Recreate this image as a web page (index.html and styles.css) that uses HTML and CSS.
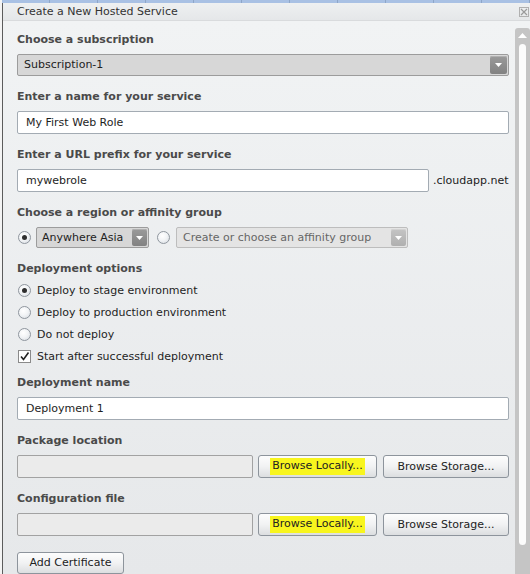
FILE: index.html
```html
<!DOCTYPE html>
<html>
<head>
<meta charset="utf-8">
<title>Create a New Hosted Service</title>
<link rel="stylesheet" href="styles.css">
</head>
<body>
<div class="strip"></div>
<div class="frame">
  <div class="titlebar">
    <span class="title">Create a New Hosted Service</span>
    <svg class="close" width="10" height="10" viewBox="0 0 10 10">
      <rect x="0.5" y="0.5" width="9" height="9" fill="none" stroke="#b0b0b0" stroke-width="1"/>
      <path d="M2 2 L8 8 M8 2 L2 8" stroke="#9a9a9a" stroke-width="1.2"/>
    </svg>
  </div>
  <div class="main">
    <div class="form">
      <div class="label first">Choose a subscription</div>
      <div class="select sub">
        <span class="sel-text">Subscription-1</span>
        <span class="dd"><svg width="7" height="4" viewBox="0 0 7 4"><path d="M0 0 L7 0 L3.5 4 Z" fill="#fff"/></svg></span>
      </div>

      <div class="label">Enter a name for your service</div>
      <div class="input">My First Web Role</div>

      <div class="label">Enter a URL prefix for your service</div>
      <div class="row">
        <div class="input url">mywebrole</div>
        <span class="suffix">.cloudapp.net</span>
      </div>

      <div class="label">Choose a region or affinity group</div>
      <div class="row region">
        <span class="radio on"></span>
        <div class="select asia">
          <span class="sel-text">Anywhere Asia</span>
          <span class="dd"><svg width="7" height="4" viewBox="0 0 7 4"><path d="M0 0 L7 0 L3.5 4 Z" fill="#fff"/></svg></span>
        </div>
        <span class="radio"></span>
        <div class="select affinity">
          <span class="sel-text">Create or choose an affinity group</span>
          <span class="dd light"><svg width="7" height="4" viewBox="0 0 7 4"><path d="M0 0 L7 0 L3.5 4 Z" fill="#fff"/></svg></span>
        </div>
      </div>

      <div class="label">Deployment options</div>
      <div class="options">
        <div class="opt"><span class="radio on"></span><span>Deploy to stage environment</span></div>
        <div class="opt"><span class="radio"></span><span>Deploy to production environment</span></div>
        <div class="opt"><span class="radio"></span><span>Do not deploy</span></div>
        <div class="opt"><span class="check"><svg width="11" height="11" viewBox="0 0 11 11"><path d="M2 5.5 L4.5 8.5 L9.5 1.5" fill="none" stroke="#222" stroke-width="1.6"/></svg></span><span>Start after successful deployment</span></div>
      </div>

      <div class="label short">Deployment name</div>
      <div class="input">Deployment 1</div>

      <div class="label">Package location</div>
      <div class="row files">
        <div class="input disabled"></div>
        <button class="btn local"><span class="hl">Browse Locally...</span></button>
        <button class="btn storage">Browse Storage...</button>
      </div>

      <div class="label">Configuration file</div>
      <div class="row files">
        <div class="input disabled"></div>
        <button class="btn local"><span class="hl">Browse Locally...</span></button>
        <button class="btn storage">Browse Storage...</button>
      </div>

      <button class="btn cert">Add Certificate</button>
    </div>
    <div class="scrollbar">
      <svg class="up" width="9" height="5" viewBox="0 0 9 5"><path d="M0 5 L9 5 L4.5 0 Z" fill="#fff"/></svg>
      <div class="thumb"></div>
    </div>
  </div>
</div>
</body>
</html>
```

FILE: styles.css
```css
html, body {
  margin: 0;
  padding: 0;
  width: 530px;
  height: 574px;
  overflow: hidden;
  background: #f4f4f4;
  font-family: "DejaVu Sans", Verdana, sans-serif;
  font-size: 11px;
  color: #222;
}

.strip {
  height: 3px;
  margin-left: 2px;
  background-color: #a9c1e4;
  background-image: repeating-linear-gradient(90deg, transparent 0, transparent 47px, #8ea6c8 47px, #8ea6c8 48px);
}

.frame {
  margin-left: 2px;
  border-left: 1px solid #5c5c5c;
  height: 571px;
  display: flex;
  flex-direction: column;
}

.titlebar {
  height: 17px;
  border-bottom: 1px solid #d9dbdd;
  background: linear-gradient(#eef0f1, #e5e7e9);
  display: flex;
  align-items: center;
  justify-content: space-between;
  padding: 0 1px 0 14px;
}

.title {
  color: #333;
  line-height: 14px;
}

.close {
  display: block;
  margin-top: 1px;
}

.main {
  flex: 1;
  display: flex;
  background: linear-gradient(#f1f3f4, #e6e8ea);
  overflow: hidden;
}

.form {
  flex: 1;
  display: flex;
  flex-direction: column;
  padding: 12px 6px 0 14px;
}

.label {
  font-weight: bold;
  color: #4a4a4a;
  line-height: 14px;
  margin: 14px 0 7px;
}
.label.first { margin-top: 0; }
.label.short { margin-top: 8px; }

.row {
  display: flex;
  align-items: center;
}

.input {
  box-sizing: border-box;
  height: 23px;
  border: 1px solid #a3abb3;
  border-radius: 2px;
  background: #fff;
  padding-left: 8px;
  line-height: 21px;
  color: #1e1e1e;
}
.input.url { width: 412px; }
.suffix {
  margin-left: 4px;
  color: #222;
}
.input.disabled {
  width: 236px;
  background: #ebebeb;
  border-color: #a2a2a2;
}

.select {
  box-sizing: border-box;
  position: relative;
  height: 22px;
  border: 1px solid #9c9c9c;
  border-radius: 2px;
  background: #d7d7d7;
  display: flex;
  align-items: center;
  justify-content: space-between;
}
.sel-text { padding-left: 6px; color: #222; }
.dd {
  width: 17px;
  height: 18px;
  margin-right: 1px;
  border-radius: 2px;
  background: linear-gradient(#9a9a9a, #828282);
  box-shadow: inset 0 1px 0 #b0b0b0;
  display: flex;
  align-items: center;
  justify-content: center;
}
.dd svg { display: block; margin-top: 1px; }

.select.sub { height: 22px; }

.region { height: 21px; }
.select.asia {
  width: 113px;
  height: 21px;
  margin-left: 5px;
}
.select.asia .sel-text { padding-left: 5px; }
.select.asia .dd { width: 15px; height: 17px; }
.select.affinity {
  width: 232px;
  height: 21px;
  margin-left: 5px;
  background: #e4e4e4;
  border-color: #bdbdbd;
}
.select.affinity .sel-text { color: #666; }
.dd.light {
  width: 15px;
  height: 17px;
  background: linear-gradient(#c4c4c4, #b0b0b0);
  box-shadow: inset 0 1px 0 #d2d2d2;
}

.radio {
  box-sizing: border-box;
  width: 13px;
  height: 13px;
  border: 1px solid #8f969e;
  border-radius: 50%;
  background: radial-gradient(circle at 40% 35%, #ffffff 0, #f2f4f6 45%, #d5dae0 100%);
  display: inline-flex;
  align-items: center;
  justify-content: center;
  flex: none;
}
.region .radio { margin-left: 1px; }
.region .radio + .select.affinity { margin-left: 6px; }
.region .select.asia + .radio { margin-left: 8px; }
.radio.on::after {
  content: "";
  width: 5px;
  height: 5px;
  border-radius: 50%;
  background: #2e2e2e;
}

.options {
  margin-top: -3px;
  display: flex;
  flex-direction: column;
}
.opt {
  height: 22px;
  display: flex;
  align-items: center;
  gap: 6px;
  padding-left: 1px;
  color: #1e1e1e;
}
.check {
  box-sizing: border-box;
  width: 13px;
  height: 13px;
  border: 1px solid #8a8a8a;
  background: #fff;
  display: inline-flex;
  align-items: center;
  justify-content: center;
  flex: none;
}
.check svg { display: block; }

.btn {
  box-sizing: border-box;
  height: 23px;
  border: 1px solid #8d949c;
  border-radius: 3px;
  background: linear-gradient(#fdfdfd, #f1f2f3 50%, #dcdee0);
  font-family: "DejaVu Sans", Verdana, sans-serif;
  font-size: 11px;
  color: #222;
  padding: 0;
  display: flex;
  align-items: center;
  justify-content: center;
}
.btn.local { width: 119px; margin-left: 5px; }
.btn.storage { width: 126px; margin-left: 6px; }
.hl {
  background: #f8f51e;
  padding: 2px 2px 3px;
  line-height: 12px;
}
.btn.cert {
  width: 107px;
  margin-top: 16px;
}

.scrollbar {
  width: 15px;
  margin-top: 7px;
  background: #c5c5c5;
  border-radius: 3px 3px 0 0;
  display: flex;
  flex-direction: column;
  align-items: center;
}
.up {
  display: block;
  margin-top: 5px;
}
.thumb {
  width: 7px;
  height: 501px;
  margin-top: 6px;
  background: #fcfcfc;
  border-radius: 4px;
}
```
